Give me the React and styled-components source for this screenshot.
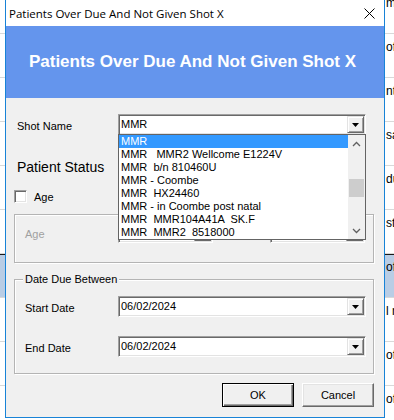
import React from "react";
import styled, { createGlobalStyle } from "styled-components";

const GlobalStyle = createGlobalStyle`
  html, body { margin: 0; padding: 0; }
  body {
    width: 394px; height: 420px; overflow: hidden; background: #fff;
    font-family: "Liberation Sans", Arial, sans-serif;
  }
`;

const Desktop = styled.div`
  position: relative;
  width: 394px;
  height: 420px;
  overflow: hidden;
  background: #fff;
`;

const BgList = styled.div`
  margin-top: -10px;
  display: flex;
  flex-direction: column;
`;

const BgRow = styled.div`
  box-sizing: border-box;
  height: 44px;
  padding: 6px 0 0 386px;
  border-bottom: 1px solid #d9d9d9;
  background: ${(p) => (p.$selected ? "#b9cde5" : "#fff")};
  box-shadow: ${(p) => (p.$selected ? "inset 0 1px 0 #1a1a1a" : "none")};
  font: 12px "Liberation Sans", Arial, sans-serif;
  color: #000;
  white-space: nowrap;
  overflow: hidden;
`;

const Window = styled.div`
  position: absolute;
  left: 5px;
  top: -1px;
  width: 380px;
  height: 419px;
  box-sizing: border-box;
  border: 1px solid #1883d7;
  background: #f0f0f0;
  display: flex;
  flex-direction: column;
`;

const TitleBar = styled.div`
  height: 26px;
  flex: none;
  background: #fff;
  display: flex;
  align-items: center;
  justify-content: space-between;
  padding: 0 9px 0 3px;
  font: 11.5px "Open Sans", "Noto Sans", sans-serif;
  color: #000;
`;

const Banner = styled.div`
  height: 72px;
  flex: none;
  background: #6495ed;
  color: #fff;
  display: flex;
  align-items: center;
  justify-content: center;
  padding-right: 5px;
  font: bold 17px "Liberation Sans", Arial, sans-serif;
`;

const Body = styled.div`
  flex: 1;
  display: flex;
  flex-direction: column;
  padding: 16px 10px 0 8px;
  font: 11px "Liberation Sans", Arial, sans-serif;
  color: #000;
`;

const FieldRow = styled.div`
  display: flex;
  align-items: center;
  height: 21px;
  margin-top: ${(p) => p.$mt || 0}px;
`;

const Label = styled.div`
  width: ${(p) => p.$w}px;
  padding-left: ${(p) => p.$pl || 0}px;
  padding-top: 3px;
  box-sizing: border-box;
  flex: none;
  color: ${(p) => (p.$disabled ? "#a0a0a0" : "#000")};
`;

const SectionTitle = styled.div`
  margin-top: 24px;
  padding-left: 3px;
  height: 16px;
  line-height: 16px;
  font-size: 14px;
`;

const CheckRow = styled.label`
  display: flex;
  align-items: center;
  gap: 7px;
  height: 13px;
  margin-top: 15px;
`;

const CheckBox = styled.span`
  width: 13px;
  height: 13px;
  box-sizing: border-box;
  background: #fff;
  border: 1px solid;
  border-color: #a0a0a0 #fff #fff #a0a0a0;
  box-shadow: inset 1px 1px 0 #696969, inset -1px -1px 0 #e3e3e3;
`;

const Combo = styled.div`
  position: relative;
  display: flex;
  box-sizing: border-box;
  width: ${(p) => p.$w}px;
  height: 21px;
  padding: 1px;
  flex: none;
  background: #fff;
  border: 1px solid;
  border-color: #a0a0a0 #fff #fff #a0a0a0;
  box-shadow: inset 1px 1px 0 #696969, inset -1px -1px 0 #e3e3e3;
`;

const ComboText = styled.div`
  flex: 1;
  padding-left: 1px;
  line-height: 17px;
  white-space: nowrap;
`;

const DropButton = styled.div`
  width: 17px;
  flex: none;
  box-sizing: border-box;
  background: #f0f0f0;
  border: 1px solid;
  border-color: #e3e3e3 #696969 #696969 #e3e3e3;
  box-shadow: inset 1px 1px 0 #fff, inset -1px -1px 0 #a0a0a0;
  display: flex;
  align-items: center;
  justify-content: center;
`;

const DropList = styled.div`
  position: absolute;
  top: 100%;
  left: -1px;
  width: 248px;
  height: 106px;
  box-sizing: border-box;
  border: 1px solid #646464;
  background: #fff;
  display: flex;
  z-index: 3;
`;

const Items = styled.div`
  flex: 1;
  display: flex;
  flex-direction: column;
  overflow: hidden;
`;

const Item = styled.div`
  height: 13px;
  line-height: 13px;
  padding-left: 2px;
  white-space: pre;
  background: ${(p) => (p.$active ? "#3399ff" : "transparent")};
  color: ${(p) => (p.$active ? "#fff" : "#000")};
`;

const ScrollBar = styled.div`
  width: 17px;
  flex: none;
  background: #f0f0f0;
  display: flex;
  flex-direction: column;
`;

const ScrollArrow = styled.div`
  height: 17px;
  flex: none;
  display: flex;
  align-items: center;
  justify-content: center;
`;

const ScrollTrack = styled.div`
  flex: 1;
  padding: 27px 1px 0;
`;

const Thumb = styled.div`
  height: 18px;
  background: #cdcdcd;
`;

const GroupBox = styled.div`
  position: relative;
  box-sizing: border-box;
  margin-top: ${(p) => p.$mt}px;
  padding: ${(p) => p.$pad};
  border: 1px solid #b4b4b4;
  box-shadow: inset 1px 1px 0 #fff, 1px 1px 0 #fff;
  display: flex;
  flex-direction: column;
  gap: ${(p) => p.$gap || 0}px;
`;

const Legend = styled.span`
  position: absolute;
  top: -7px;
  left: 8px;
  padding: 0 2px;
  line-height: 13px;
  background: #f0f0f0;
`;

const AgeRow = styled.div`
  display: flex;
  align-items: center;
  height: 21px;
`;

const Gap = styled.div`
  width: ${(p) => p.$w}px;
  flex: none;
`;

const ButtonRow = styled.div`
  display: flex;
  justify-content: flex-end;
  gap: 8px;
  margin-top: 9px;
`;

const Button = styled.button`
  width: 72px;
  height: 24px;
  box-sizing: border-box;
  font: 11px "Liberation Sans", Arial, sans-serif;
  color: #000;
  background: #f0f0f0;
  padding: 0;
  border: 1px solid;
  border-color: ${(p) => (p.$default ? "#000" : "#fff #696969 #696969 #fff")};
  box-shadow: ${(p) =>
    p.$default
      ? "inset 1px 1px 0 #fff, inset -1px -1px 0 #696969, inset -2px -2px 0 #a0a0a0"
      : "inset -1px -1px 0 #a0a0a0, inset 1px 1px 0 #e3e3e3"};
`;

const Arrow = () => (
  <svg width="7" height="4" viewBox="0 0 7 4">
    <polygon points="0,0 7,0 3.5,4" fill="#000" />
  </svg>
);

const Chevron = ({ up }) => (
  <svg width="9" height="6" viewBox="0 0 9 6">
    <polyline
      points={up ? "1,5 4.5,1.5 8,5" : "1,1 4.5,4.5 8,1"}
      fill="none"
      stroke="#606060"
      strokeWidth="1.3"
    />
  </svg>
);

const CloseIcon = () => (
  <svg width="11" height="11" viewBox="0 0 11 11">
    <path d="M0.5 0.5 L10.5 10.5 M10.5 0.5 L0.5 10.5" stroke="#000" strokeWidth="1" />
  </svg>
);

const bgTexts = ["m", "of", "nts", "sa", "du", "st", "of", "l n", "of", "of", ""];

const shots = [
  "MMR",
  "MMR   MMR2 Wellcome E1224V",
  "MMR  b/n 810460U",
  "MMR - Coombe",
  "MMR  HX24460",
  "MMR - in Coombe post natal",
  "MMR  MMR104A41A  SK.F",
  "MMR  MMR2  8518000",
];

function DateCombo({ value }) {
  return (
    <Combo $w={248}>
      <ComboText>{value}</ComboText>
      <DropButton>
        <Arrow />
      </DropButton>
    </Combo>
  );
}

export default function App() {
  return (
    <>
      <GlobalStyle />
      <Desktop>
        <BgList>
          {bgTexts.map((t, i) => (
            <BgRow key={i} $selected={i === 6}>
              {t}
            </BgRow>
          ))}
        </BgList>
        <Window>
          <TitleBar>
            <span>Patients Over Due And Not Given Shot X</span>
            <CloseIcon />
          </TitleBar>
          <Banner>Patients Over Due And Not Given Shot X</Banner>
          <Body>
            <FieldRow>
              <Label $w={104} $pl={3}>Shot Name</Label>
              <Combo $w={248}>
                <ComboText>MMR</ComboText>
                <DropButton>
                  <Arrow />
                </DropButton>
                <DropList>
                  <Items>
                    {shots.map((s, i) => (
                      <Item key={i} $active={i === 0}>
                        {s}
                      </Item>
                    ))}
                  </Items>
                  <ScrollBar>
                    <ScrollArrow>
                      <Chevron up />
                    </ScrollArrow>
                    <ScrollTrack>
                      <Thumb />
                    </ScrollTrack>
                    <ScrollArrow>
                      <Chevron />
                    </ScrollArrow>
                  </ScrollBar>
                </DropList>
              </Combo>
            </FieldRow>
            <SectionTitle>Patient Status</SectionTitle>
            <CheckRow>
              <CheckBox />
              <span>Age</span>
            </CheckRow>
            <GroupBox $mt={11} $pad="7px 0 19px 10px">
              <AgeRow>
                <Label $w={93} $disabled>Age</Label>
                <Combo $w={95}>
                  <ComboText />
                  <DropButton>
                    <Arrow />
                  </DropButton>
                </Combo>
                <Gap $w={57} />
                <Combo $w={95}>
                  <ComboText />
                  <DropButton>
                    <Arrow />
                  </DropButton>
                </Combo>
              </AgeRow>
            </GroupBox>
            <GroupBox $mt={16} $pad="16px 0 16px 10px" $gap={19}>
              <Legend>Date Due Between</Legend>
              <FieldRow>
                <Label $w={93}>Start Date</Label>
                <DateCombo value="06/02/2024" />
              </FieldRow>
              <FieldRow>
                <Label $w={93}>End Date</Label>
                <DateCombo value="06/02/2024" />
              </FieldRow>
            </GroupBox>
            <ButtonRow>
              <Button $default>OK</Button>
              <Button>Cancel</Button>
            </ButtonRow>
          </Body>
        </Window>
      </Desktop>
    </>
  );
}
